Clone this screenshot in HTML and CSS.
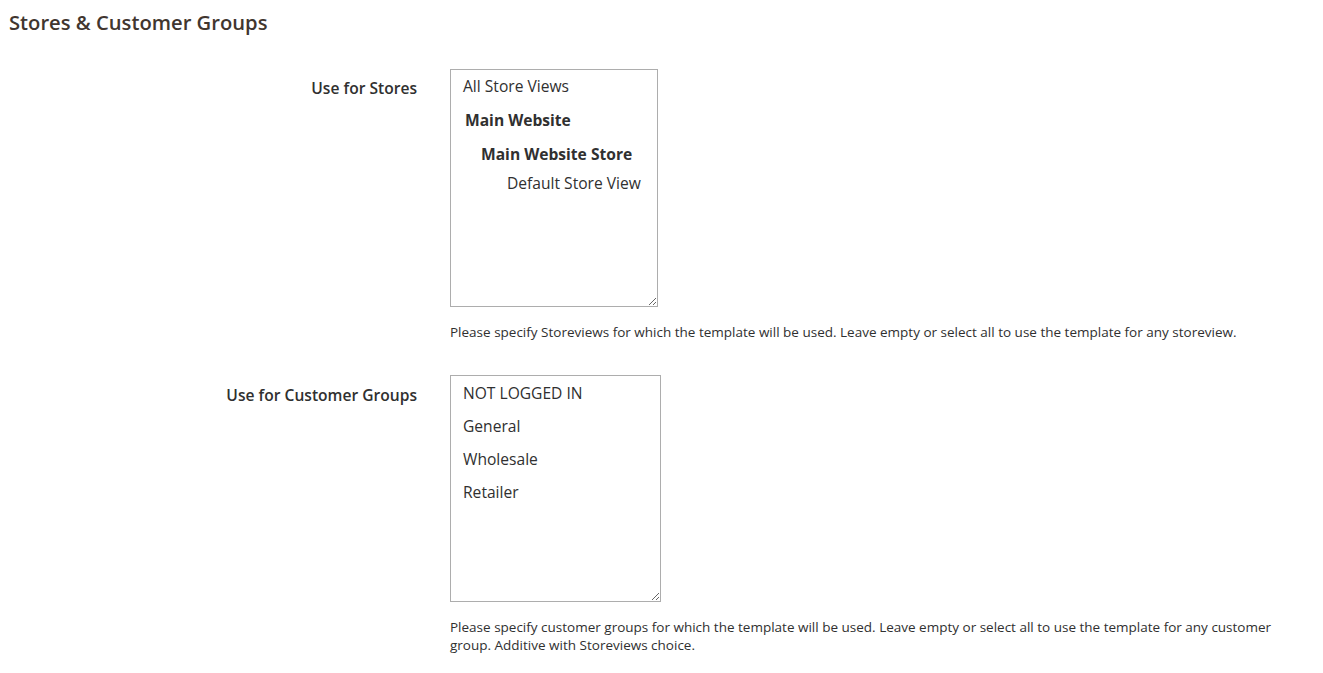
FILE: index.html
```html
<!DOCTYPE html>
<html lang="en">
<head>
    <meta charset="UTF-8">
    <meta name="viewport" content="width=device-width, initial-scale=1.0">
    <title>Stores &amp; Customer Groups</title>
    <link rel="stylesheet" href="styles.css">
</head>
<body>

    <h2 class="section-title">Stores &amp; Customer Groups</h2>

    <div class="fieldset">
        <!-- Stores -->
        <div class="field">
            <div class="field-label">Use for Stores</div>
            <div class="field-control">
                <div class="listbox listbox-stores">
                    <div class="opt">All Store Views</div>
                    <div class="opt opt-website">Main Website</div>
                    <div class="opt opt-group">Main Website Store</div>
                    <div class="opt opt-view">Default Store View</div>
                </div>
                <div class="note">Please specify Storeviews for which the template will be used. Leave empty or select all to use the template for any storeview.</div>
            </div>
        </div>

        <!-- Customer groups -->
        <div class="field">
            <div class="field-label label-groups">Use for Customer Groups</div>
            <div class="field-control">
                <div class="listbox listbox-groups">
                    <div class="opt">NOT LOGGED IN</div>
                    <div class="opt">General</div>
                    <div class="opt">Wholesale</div>
                    <div class="opt">Retailer</div>
                </div>
                <div class="note">Please specify customer groups for which the template will be used. Leave empty or select all to use the template for any customer group. Additive with Storeviews choice.</div>
            </div>
        </div>
    </div>

</body>
</html>
```

FILE: styles.css
```css
body { margin: 0; background: #fff; font-family: "Open Sans", "Liberation Sans", sans-serif; color: #303030; }

.section-title { margin: 0; padding: 9px 0 0 9px; font-size: 20.2px; font-weight: 600; color: #41362f; line-height: 26px; }

.fieldset { padding-top: 34px; }
.field { display: flex; margin-bottom: 34px; }
.field-label { width: 417px; text-align: right; font-size: 15.6px; font-weight: 600; line-height: 22px; padding-top: 8px; box-sizing: border-box; }
.label-groups { padding-top: 9px; }
.field-control { margin-left: 33px; width: 830px; }

.listbox { border: 1px solid #adadad; box-sizing: border-box; resize: both; overflow: auto; padding: 5px 0 0 12px; font-size: 15.6px; line-height: 22px; }
.listbox-stores { width: 208px; height: 238px; }
.listbox-groups { width: 211px; height: 227px; }
.listbox-groups .opt:first-child { margin-top: 1px; }

.opt { white-space: nowrap; margin-bottom: 11px; }
.listbox-stores .opt { margin-bottom: 12px; }
.opt-website { font-weight: 700; padding-left: 2px; }
.opt-group { font-weight: 700; padding-left: 18px; }
.opt-view { padding-left: 44px; margin-top: -5px; }

.note { font-size: 13.5px; line-height: 18px; margin-top: 16px; }
```
